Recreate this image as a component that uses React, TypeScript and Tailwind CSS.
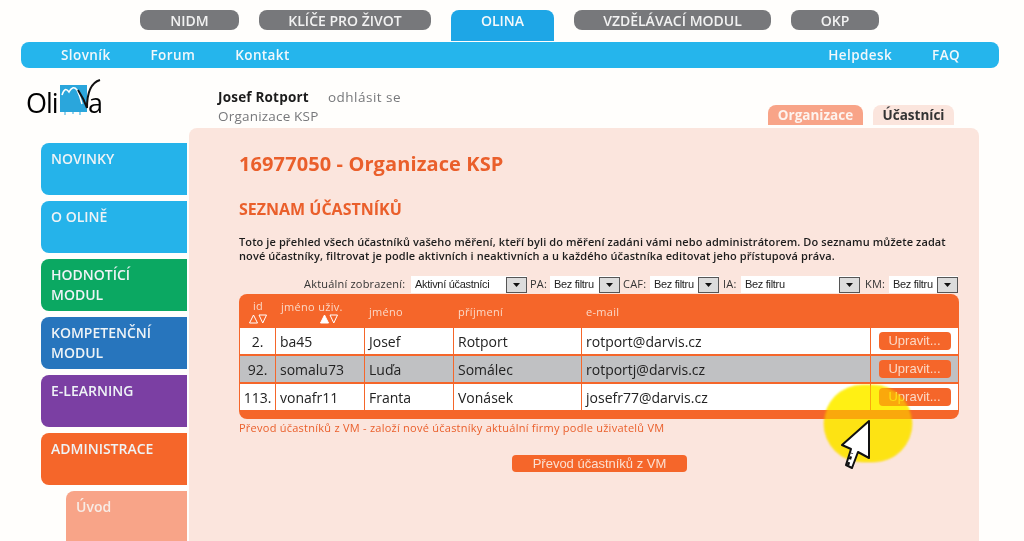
import React from 'react';

const topTabs = [
  { label: 'NIDM', w: 'w-[99px]' },
  { label: 'KLÍČE PRO ŽIVOT', w: 'w-[172px]' },
  { label: 'OLINA', w: 'w-[103px]', active: true },
  { label: 'VZDĚLÁVACÍ MODUL', w: 'w-[197px]' },
  { label: 'OKP', w: 'w-[88px]' },
];

const sideItems = [
  { label: 'NOVINKY', bg: 'bg-[#25b3ea]' },
  { label: 'O OLINĚ', bg: 'bg-[#25b3ea]' },
  { label: 'HODNOTÍCÍ MODUL', bg: 'bg-[#0ba862]' },
  { label: 'KOMPETENČNÍ MODUL', bg: 'bg-[#2775bd]' },
  { label: 'E-LEARNING', bg: 'bg-[#7b3fa3]' },
  { label: 'ADMINISTRACE', bg: 'bg-[#f5662a]' },
];

const rows = [
  { id: '2.', user: 'ba45', name: 'Josef', last: 'Rotport', mail: 'rotport@darvis.cz' },
  { id: '92.', user: 'somalu73', name: 'Luďa', last: 'Somálec', mail: 'rotportj@darvis.cz', grey: true },
  { id: '113.', user: 'vonafr11', name: 'Franta', last: 'Vonásek', mail: 'josefr77@darvis.cz' },
];

const Logo = () => (
  <div className="flex items-end h-[38px] w-[90px] ml-[26px] mt-[10px] text-[27px] leading-[27px] tracking-[-1px] text-black font-['Open_Sans',sans-serif]">
    <span className="w-[34px] shrink-0">Oli</span>
    <svg width="42" height="38" viewBox="0 0 42 38" className="shrink-0">
      <rect x="0" y="7" width="27" height="27" fill="#2aa6dc" />
      <path d="M2 17 C4 11 6 10 9 14 C11 10 14 8 17 12 C20 18 21 22 22 26" fill="none" stroke="#fff" strokeWidth="1.500" />
      <path d="M18 12 C22 18 25 24 27 30 C27 18 30 5 40 2" fill="none" stroke="#111" strokeWidth="2" />
      <path d="M5 34v3M13 34v2M20 34v3" stroke="#2aa6dc" strokeWidth="1" />
    </svg>
    <span className="relative -ml-[14px]">a</span>
  </div>
);

const Select = ({ label, value, labelW, w, gap }: { label: string; value: string; labelW: string; w: string; gap: string }) => (
  <div className={`flex items-center h-[17px] ${gap}`}>
    <span className={`${labelW} text-[11px] tracking-[0.2px] text-[#333]`}>{label}</span>
    <div className={`flex items-center justify-between bg-white h-[17px] ${w}`}>
      <span className="pl-[4px] text-[11px] tracking-[-0.3px] text-[#222] font-['Liberation_Sans',sans-serif]">{value}</span>
      <span className="flex items-center justify-center w-[21px] h-[16px] bg-[#dcdcdc] border border-[#555]">
        <svg width="7" height="4" viewBox="0 0 7 4"><path d="M0 0h7L3.500 4z" fill="#111" /></svg>
      </span>
    </div>
  </div>
);

// sipky razeni v hlavicce, upFilled = aktivni razeni
const SortArrows = ({ upFilled }: { upFilled?: boolean }) => (
  <svg width="18" height="10" viewBox="0 0 18 10" className="shrink-0">
    <path d="M4.500 1 L8.500 9 L0.500 9 Z" fill={upFilled ? '#fff' : 'none'} stroke="#fff" strokeWidth="1" />
    <path d="M10 1 L17.500 1 L13.750 9 Z" fill="none" stroke="#fff" strokeWidth="1" />
  </svg>
);

const App = () => {
  const cell = 'flex items-center px-[4px] text-[14px] font-medium text-[#222]';
  return (
    <div className="relative h-[541px] w-[1024px] overflow-hidden bg-[#fffefc] font-['Open_Sans',sans-serif]">
      {/* horni zalozky */}
      <div className="flex items-start gap-5 pl-[140px] pt-[10px] h-[42px]">
        {topTabs.map((t) => (
          <div
            key={t.label}
            className={
              t.active
                ? `${t.w} h-[31px] rounded-t-lg bg-[#1ea6e6] pt-[2px] text-center text-[14px] leading-[17px] font-semibold text-[#f4f8fa]`
                : `${t.w} h-[20px] rounded-lg bg-[#77787b] text-center text-[14px] leading-[21px] font-semibold text-[#f2f2f2]`
            }
          >
            {t.label}
          </div>
        ))}
      </div>

      {/* modra lista */}
      <div className="ml-[21px] w-[978px] h-[26px] rounded-lg bg-[#25b5ec] flex items-center justify-between pl-10 pr-[39px] text-[13.500px] leading-[28px] font-semibold tracking-[0.4px] text-[#f2f8fb]">
        <div className="flex gap-10">
          <span>Slovník</span>
          <span>Forum</span>
          <span>Kontakt</span>
        </div>
        <div className="flex gap-10">
          <span>Helpdesk</span>
          <span>FAQ</span>
        </div>
      </div>

      <div className="flex">
        {/* levy sloupec */}
        <div className="w-[189px] shrink-0">
          <Logo />
          <div className="mt-[27px] ml-[41px] flex flex-col gap-[6px]">
            {sideItems.map((s) => (
              <div
                key={s.label}
                className={`${s.bg} w-[146px] h-[52px] rounded-l-lg pl-[10px] pr-2 pt-[6px] text-[14px] leading-[20px] font-semibold text-[#eef3f6]`}
              >
                {s.label}
              </div>
            ))}
            <div className="ml-[25px] w-[121px] h-[60px] rounded-tl-lg bg-[#f8a488] pl-[10px] pt-[6px] text-[14px] leading-[20px] font-semibold text-[#f8ece6]">
              Úvod
            </div>
          </div>
        </div>

        {/* obsah */}
        <div className="w-[790px]">
          <div className="h-[60px] flex justify-between pl-[29px] pr-[25px]">
            <div className="pt-[20px] text-[13.500px] leading-[19px] tracking-[0.2px]">
              <div className="flex gap-[19px]">
                <span className="font-bold text-[#1c1c1c]">Josef Rotport</span>
                <span className="tracking-[0.5px] text-[#77787b]">odhlásit se</span>
              </div>
              <div className="text-[#77787b]">Organizace KSP</div>
            </div>
            <div className="flex items-end gap-[10px] pb-[3px] text-[13.500px] font-bold">
              <div className="w-[95px] h-[20px] rounded-t-lg bg-[#f8a488] text-center leading-[21px] text-[#fdf3ee]">Organizace</div>
              <div className="w-[81px] h-[20px] rounded-t-lg bg-[#fbe5dd] text-center leading-[21px] text-[#333]">Účastníci</div>
            </div>
          </div>

          <div className="h-[413px] rounded-t-lg bg-[#fbe5dd] pl-[50px] pr-[20px] pt-[22px]">
            <h1 className="text-[20px] leading-[28px] tracking-[0.1px] font-bold text-[#ea5f2b]">16977050 - Organizace KSP</h1>
            <h2 className="mt-[21px] text-[16px] leading-[20px] font-bold text-[#ea5f2b]">SEZNAM ÚČASTNÍKŮ</h2>
            <p className="mt-[16px] text-[11px] leading-[14px] tracking-[0.1px] text-[#1c1c1c] font-semibold">
              Toto je přehled všech účastníků vašeho měření, kteří byli do měření zadáni vámi nebo administrátorem. Do seznamu můžete zadat
              <br />
              nové účastníky, filtrovat je podle aktivních i neaktivních a u každého účastníka editovat jeho přístupová práva.
            </p>

            <div className="mt-[13px] flex pl-[65px]">
              <Select label="Aktuální zobrazení:" value="Aktivní účastníci" labelW="w-[107px]" w="w-[116px]" gap="" />
              <Select label="PA:" value="Bez filtru" labelW="w-[20px]" w="w-[70px]" gap="ml-[3px]" />
              <Select label="CAF:" value="Bez filtru" labelW="w-[27px]" w="w-[69px]" gap="ml-[3px]" />
              <Select label="IA:" value="Bez filtru" labelW="w-[18px]" w="w-[119px]" gap="ml-[4px]" />
              <Select label="KM:" value="Bez filtru" labelW="w-[24px]" w="w-[69px]" gap="ml-[5px]" />
            </div>

            {/* tabulka */}
            <div className="mt-[1px] w-[720px] rounded-lg bg-[#f5662a] px-[1px] pt-[1px] pb-[9px]">
              <div className="grid grid-cols-[36px_89px_89px_128px_289px_1fr] h-[33px] text-[11px] leading-[12px] tracking-[0.3px] text-[#fbd8c6]">
                <div className="flex flex-col items-center pt-[5px] gap-[2px]">
                  <span>id</span>
                  <SortArrows />
                </div>
                <div className="flex flex-col pt-[6px] pl-[5px] gap-[1px]">
                  <span>jméno uživ.</span>
                  <span className="self-center pl-[11px]">
                    <SortArrows upFilled />
                  </span>
                </div>
                <div className="pl-[4px] pt-[11px]">jméno</div>
                <div className="pl-[4px] pt-[11px]">příjmení</div>
                <div className="pl-[4px] pt-[11px]">e-mail</div>
                <div />
              </div>
              <div className="flex flex-col gap-[2px]">
                {rows.map((r) => {
                  const bg = r.grey ? 'bg-[#c0c1c3]' : 'bg-white';
                  return (
                    <div key={r.id} className="grid grid-cols-[35px_88px_88px_127px_288px_1fr] gap-x-[1px] h-[26px]">
                      <div className={`${cell} ${bg} justify-center px-0`}>{r.id}</div>
                      <div className={`${cell} ${bg}`}>{r.user}</div>
                      <div className={`${cell} ${bg}`}>{r.name}</div>
                      <div className={`${cell} ${bg}`}>{r.last}</div>
                      <div className={`${cell} ${bg}`}>{r.mail}</div>
                      <div className={`${bg} flex items-center justify-center`}>
                        <span className="w-[72px] h-[18px] rounded bg-[#f5662a] text-center text-[13px] leading-[18px] text-[#fbd8c6] font-['Liberation_Sans',sans-serif]">
                          Upravit...
                        </span>
                      </div>
                    </div>
                  );
                })}
              </div>
            </div>

            <p className="mt-[1px] text-[11px] leading-[15px] tracking-[0.25px] text-[#ea5f2b]">
              Převod účastníků z VM - založí nové účastníky aktuální firmy podle uživatelů VM
            </p>
            <div className="mt-[20px] ml-[273px] w-[175px] h-[17px] rounded bg-[#f5662a] text-center text-[13px] leading-[17px] text-[#fbe0d2] font-['Liberation_Sans',sans-serif]">
              Převod účastníků z VM
            </div>
          </div>
        </div>
      </div>

      {/* zvyrazneni kurzoru */}
      <div className="absolute left-[824px] top-[385px] w-[88px] h-[77px] rounded-full bg-[#fff014] mix-blend-multiply blur-[1px]" />
      <div className="absolute left-[824px] top-[385px] w-[88px] h-[77px] rounded-full bg-[#fff014] opacity-50 blur-[1px]" />
      <svg className="absolute left-[838px] top-[416px]" width="36" height="54" viewBox="0 0 36 54">
        <path d="M31 5 L4 29 L13 33 L8 49 L14 52 L20 36 L31 42 Z" fill="#fff" stroke="#111" strokeWidth="2" strokeLinejoin="round" />
        <path d="M10 49 L14 37" stroke="#111" strokeWidth="2.500" strokeDasharray="3 3" />
      </svg>
    </div>
  );
};

export default App;
